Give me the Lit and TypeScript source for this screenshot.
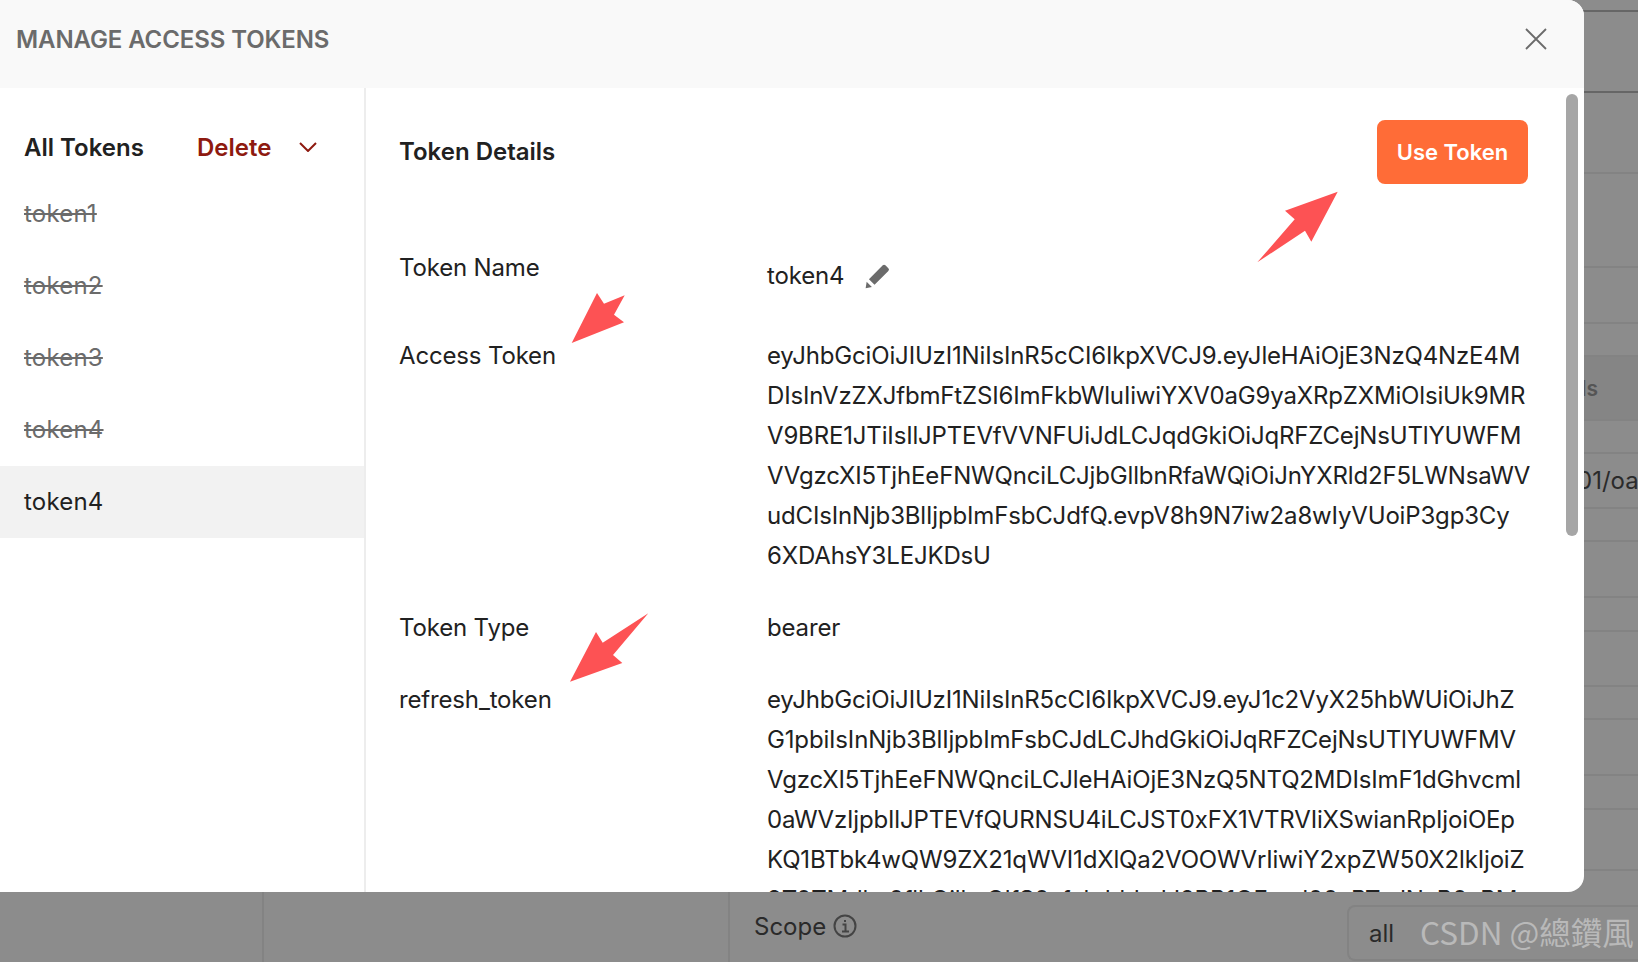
import { LitElement, css, html, svg } from 'lit';
import { customElement } from 'lit/decorators.js';

const ACCESS_LINES = [
  'eyJhbGciOiJIUzI1NiIsInR5cCI6IkpXVCJ9.eyJleHAiOjE3NzQ4NzE4M',
  'DIsInVzZXJfbmFtZSI6ImFkbWluIiwiYXV0aG9yaXRpZXMiOlsiUk9MR',
  'V9BRE1JTiIsIlJPTEVfVVNFUiJdLCJqdGkiOiJqRFZCejNsUTlYUWFM',
  'VVgzcXI5TjhEeFNWQnciLCJjbGllbnRfaWQiOiJnYXRld2F5LWNsaWV',
  'udCIsInNjb3BlIjpbImFsbCJdfQ.evpV8h9N7iw2a8wIyVUoiP3gp3Cy',
  '6XDAhsY3LEJKDsU',
];

const REFRESH_LINES = [
  'eyJhbGciOiJIUzI1NiIsInR5cCI6IkpXVCJ9.eyJ1c2VyX25hbWUiOiJhZ',
  'G1pbiIsInNjb3BlIjpbImFsbCJdLCJhdGkiOiJqRFZCejNsUTlYUWFMV',
  'VgzcXI5TjhEeFNWQnciLCJleHAiOjE3NzQ5NTQ2MDIsImF1dGhvcml',
  '0aWVzIjpbIlJPTEVfQURNSU4iLCJST0xFX1VTRVIiXSwianRpIjoiOEp',
  'KQ1BTbk4wQW9ZX21qWVI1dXlQa2VOOWVrIiwiY2xpZW50X2lkIjoiZ',
  '9T0TMdkc0flkOilkcOlfS0sfxkdddxdJ2BB1QExvd00xBTxdNxB0xBM',
];

const DELETED_TOKENS = ['token1', 'token2', 'token3', 'token4'];

// y of every row line in the dimmed page behind the modal
const ROW_LINES = [11, 92, 173, 267, 323, 356, 420, 453, 508, 541, 597, 631, 686, 719, 775, 809, 870];

const ARROWS = [
  '1337.7,191.7 1285,210.7 1294.7,219.3 1257.3,262.3 1305,230.7 1311.3,241.7',
  '597,293 604,303.7 624.7,295.3 614,314.7 624,322.3 571.7,343',
  '648.3,613.3 602.7,642.7 596,632 570,681.7 622.3,663 613,655',
];

@customElement('app-root')
export class AppRoot extends LitElement {
  static styles = css`
    :host {
      display: block;
      font-family: Inter, 'Noto Sans', sans-serif;
      color: #212121;
    }

    .page {
      position: relative;
      height: 962px;
      overflow: hidden;
      background: #8c8c8c;
      font-size: 24px;
    }

    /* dimmed page behind the modal */
    .rows {
      height: 892px;
      display: flex;
      flex-direction: column;
    }

    .row {
      box-sizing: border-box;
      border-bottom: 2px solid #838383;
      white-space: nowrap;
      overflow: hidden;
      display: flex;
      align-items: center;
    }

    .row.strong {
      border-bottom-color: #666;
    }

    .row.band {
      background: #858585;
      justify-content: flex-end;
      padding-right: 40px;
      font-size: 21px;
      font-weight: 600;
      color: #555;
    }

    .row.url {
      padding-left: 1577px;
      color: #2a2a2a;
    }

    .footer {
      height: 70px;
      display: flex;
    }

    .cell {
      box-sizing: border-box;
      border-right: 2px solid #838383;
    }

    .cell.first {
      width: 264px;
    }

    .cell.second {
      width: 466px;
    }

    .scope {
      flex: none;
      width: 617px;
      box-sizing: border-box;
      padding: 0 0 2px 24px;
      display: flex;
      align-items: center;
      gap: 7px;
      color: #2a2a2a;
    }

    .scope svg {
      display: block;
    }

    .all-box {
      flex: 1;
      box-sizing: border-box;
      height: 56px;
      margin-top: 13px;
      padding-left: 20px;
      display: flex;
      align-items: center;
      border: 2px solid #838383;
      border-right: 0;
      border-radius: 8px 0 0 8px;
      color: #2a2a2a;
    }

    .watermark {
      position: absolute;
      left: 1420px;
      top: 908px;
      font-family: 'Noto Sans CJK TC', 'Liberation Sans', sans-serif;
      font-size: 31.5px;
      line-height: 46px;
      color: #b9b9b9;
      white-space: nowrap;
    }

    /* modal */
    .modal {
      position: absolute;
      left: 0;
      top: 0;
      width: 1584px;
      height: 892px;
      background: #fff;
      border-radius: 0 16px 16px 0;
      overflow: hidden;
      display: flex;
      flex-direction: column;
    }

    .modal-head {
      flex: none;
      height: 88px;
      box-sizing: border-box;
      padding: 0 37px 10px 16px;
      display: flex;
      align-items: center;
      justify-content: space-between;
      background: #f9f9f9;
    }

    .modal-title {
      font-weight: 600;
      letter-spacing: -0.1px;
      color: #6b6b6b;
    }

    .close {
      display: block;
    }

    .modal-body {
      flex: 1;
      min-height: 0;
      display: flex;
    }

    .sidebar {
      flex: none;
      width: 366px;
      box-sizing: border-box;
      border-right: 2px solid #ededed;
    }

    .side-head {
      height: 90px;
      box-sizing: border-box;
      padding: 28px 47px 0 24px;
      display: flex;
      align-items: center;
    }

    .side-title {
      width: 173px;
      font-weight: 600;
    }

    .delete {
      flex: 1;
      font-weight: 600;
      color: #8e1a10;
    }

    .token-row {
      height: 72px;
      box-sizing: border-box;
      padding: 0 0 2px 24px;
      display: flex;
      align-items: center;
      letter-spacing: 0.2px;
    }

    .token-row.deleted {
      color: #6b6b6b;
      text-decoration: line-through;
    }

    .token-row.selected {
      background: #f2f2f2;
    }

    .details {
      flex: 1;
      min-width: 0;
      padding: 32px 56px 0 33px;
    }

    .details-head {
      display: flex;
      align-items: center;
      justify-content: space-between;
      margin-bottom: 64px;
    }

    .details-title {
      font-weight: 600;
      margin-bottom: 2px;
    }

    .use-token {
      width: 151px;
      height: 64px;
      border-radius: 8px;
      background: #ff6c37;
      color: #fff;
      font-size: 22px;
      font-weight: 600;
      display: flex;
      align-items: center;
      justify-content: center;
    }

    .fields {
      display: grid;
      grid-template-columns: 368px 1fr;
      gap: 32px 0;
      line-height: 40px;
      letter-spacing: -0.16px;
      white-space: nowrap;
    }

    .name-value {
      padding: 8px 0;
      display: flex;
      align-items: center;
      gap: 21px;
    }

    .scrollbar {
      position: absolute;
      left: 1566px;
      top: 94px;
      width: 12px;
      height: 442px;
      border-radius: 6px;
      background: #a6a6a6;
    }

    .arrows {
      position: absolute;
      inset: 0;
      pointer-events: none;
    }
  `;

  private renderBackdrop() {
    let prev = 0;
    return html`
      <div class="rows">
        ${ROW_LINES.map((y, i) => {
          const height = y + 1 - prev;
          prev = y + 1;
          const cls = i < 2 ? 'row strong' : i === 6 ? 'row band' : i === 8 ? 'row url' : 'row';
          const text = i === 6 ? 'Details' : i === 8 ? '01/oauth/token' : '';
          return html`<div class=${cls} style="height:${height}px">${text}</div>`;
        })}
      </div>
      <div class="footer">
        <div class="cell first"></div>
        <div class="cell second"></div>
        <div class="scope">
          Scope
          <svg width="24" height="24" viewBox="0 0 24 24" fill="none" stroke="#444" stroke-width="2">
            <circle cx="12" cy="12" r="10.5"></circle>
            <path d="M9.5 10.5H12.5V17.5M9 17.5H16M12 6V8"></path>
          </svg>
        </div>
        <div class="all-box">all</div>
      </div>
      <div class="watermark">CSDN @總鑽風</div>
    `;
  }

  private renderSidebar() {
    return html`
      <div class="sidebar">
        <div class="side-head">
          <div class="side-title">All Tokens</div>
          <div class="delete">Delete</div>
          <svg width="18" height="10" viewBox="0 0 18 10" fill="none" stroke="#8e1a10" stroke-width="2">
            <path d="M1 1L9 9L17 1"></path>
          </svg>
        </div>
        ${DELETED_TOKENS.map((name) => html`<div class="token-row deleted">${name}</div>`)}
        <div class="token-row selected">token4</div>
      </div>
    `;
  }

  private renderDetails() {
    return html`
      <div class="details">
        <div class="details-head">
          <div class="details-title">Token Details</div>
          <div class="use-token">Use Token</div>
        </div>
        <div class="fields">
          <div>Token Name</div>
          <div class="name-value">
            token4
            <svg width="25" height="25" viewBox="376 70 76 76" fill="#6b6b6b">
              <path d="M388 116L430 74Q434 70 438 74L447 83Q451 87 447 91L405 133Z"></path>
              <path d="M381 124L397 140L378 144Z"></path>
            </svg>
          </div>
          <div>Access Token</div>
          <div>${ACCESS_LINES.map((line) => html`<div>${line}</div>`)}</div>
          <div>Token Type</div>
          <div>bearer</div>
          <div>refresh_token</div>
          <div>${REFRESH_LINES.map((line) => html`<div>${line}</div>`)}</div>
        </div>
      </div>
    `;
  }

  render() {
    return html`
      <div class="page">
        ${this.renderBackdrop()}
        <div class="modal">
          <div class="modal-head">
            <div class="modal-title">MANAGE ACCESS TOKENS</div>
            <svg class="close" width="22" height="22" viewBox="0 0 22 22" stroke="#6b6b6b" stroke-width="1.8">
              <path d="M1 1L21 21M21 1L1 21"></path>
            </svg>
          </div>
          <div class="modal-body">${this.renderSidebar()}${this.renderDetails()}</div>
        </div>
        <div class="scrollbar"></div>
        <svg class="arrows" width="1638" height="962" viewBox="0 0 1638 962" fill="#fd5254">
          ${ARROWS.map((points) => svg`<polygon points=${points}></polygon>`)}
        </svg>
      </div>
    `;
  }
}

declare global {
  interface HTMLElementTagNameMap {
    'app-root': AppRoot;
  }
}
